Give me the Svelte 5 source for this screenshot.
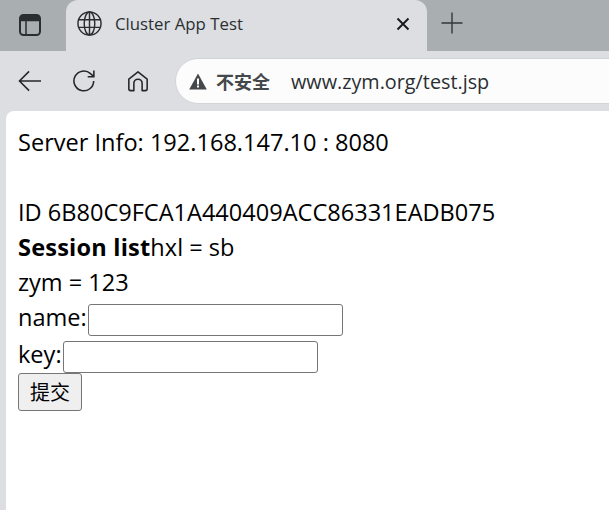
<script lang="ts">
  let name = $state('');
  let key = $state('');
</script>

<div class="browser">
  <div class="tabstrip">
    <div class="strip-btn">
      <svg width="24" height="24" viewBox="0 0 24 24" fill="none" stroke="#2b2e31" stroke-width="2">
        <rect x="2" y="2" width="20" height="20" rx="3.5" />
        <path d="M2 7.5h20M8 7.5V22" stroke-width="1.5" />
        <path d="M3 5h18" stroke-width="4" />
      </svg>
    </div>
    <div class="tab">
      <svg class="globe" width="25" height="25" viewBox="0 0 26 26" fill="none" stroke="#2b2e31" stroke-width="1.5">
        <circle cx="13" cy="13" r="12" />
        <ellipse cx="13" cy="13" rx="5.500" ry="12" />
        <path d="M13 1v24M1.800 9h22.400M1.800 17h22.400" />
      </svg>
      <span class="tab-title">Cluster App Test</span>
      <svg class="close" width="14" height="14" viewBox="0 0 14 14" stroke="#17191b" stroke-width="1.9">
        <path d="M1.5 1.5l11 11M12.500 1.500l-11 11" />
      </svg>
    </div>
    <svg class="plus" width="22" height="22" viewBox="0 0 22 22" stroke="#33373a" stroke-width="1.4">
      <path d="M11 0.500v21M0.500 11h21" />
    </svg>
  </div>

  <div class="toolbar">
    <svg class="nav back" width="24" height="22" viewBox="0 0 26 24" fill="none" stroke="#24272a" stroke-width="1.7">
      <path d="M25 12H1.500M12 1.500L1.500 12 12 22.500" />
    </svg>
    <svg class="nav reload" width="24" height="24" viewBox="0 0 26 26" fill="none" stroke="#24272a" stroke-width="1.7">
      <path d="M23.500 13A10.700 10.700 0 1 1 20 5L23.500 8" />
      <path d="M23.700 1.500V8.300H17" />
    </svg>
    <svg class="nav home" width="22" height="22" viewBox="0 0 24 24" fill="none" stroke="#24272a" stroke-width="1.7" stroke-linejoin="round">
      <path d="M2 10L12 2l10 8v10.500a2 2 0 0 1-2 2h-3.500v-8a4.500 4.500 0 0 0-9 0v8H4a2 2 0 0 1-2-2z" />
    </svg>
    <div class="omnibox">
      <svg width="18" height="17" viewBox="0 0 18 17">
        <path d="M9 0.500L17.800 16.500H0.200z" fill="#45484b" />
        <path d="M8 5.500h2v6H8zM8 12.500h2v2H8z" fill="#fff" />
      </svg>
      <span class="insecure">不安全</span>
      <span class="url">www.zym.org/test.jsp</span>
    </div>
  </div>

  <main class="page">
    <div>Server Info: 192.168.147.10 : 8080</div>
    <br />
    <div>ID 6B80C9FCA1A440409ACC86331EADB075</div>
    <div><b>Session list</b>hxl = sb</div>
    <div>zym = 123</div>
    <form on:submit|preventDefault>
      <div class="field">name:<input type="text" bind:value={name} /></div>
      <div class="field">key:<input type="text" bind:value={key} /></div>
      <button type="submit">提交</button>
    </form>
  </main>
</div>

<style>
  :global(body) {
    margin: 0;
    overflow: hidden;
  }

  .browser {
    width: 609px;
    height: 510px;
    overflow: hidden;
    background: #dcdee2;
    font-family: "Open Sans", "Noto Sans CJK SC", sans-serif;
    display: flex;
    flex-direction: column;
  }

  .tabstrip {
    height: 51px;
    flex: none;
    background: #a9aeb1;
    display: flex;
    align-items: flex-start;
  }

  .strip-btn {
    width: 66px;
    height: 51px;
    flex: none;
    padding: 13px 0 0 18px;
    box-sizing: border-box;
    background: #a9aeb1;
  }

  .tab {
    width: 361px;
    height: 51px;
    flex: none;
    background: #dcdee2;
    border-radius: 12px 12px 0 0;
    display: flex;
    align-items: center;
    box-sizing: border-box;
    padding: 0 17px 4px 11px;
  }

  .tab-title {
    margin-left: 13px;
    font-size: 16.8px;
    color: #2b2e31;
    flex: 1;
  }

  .plus {
    margin: 12px 0 0 14px;
  }

  .toolbar {
    height: 60px;
    flex: none;
    display: flex;
    align-items: center;
    padding-left: 18px;
    box-sizing: border-box;
  }

  .nav {
    flex: none;
    margin-bottom: 1px;
  }

  .reload {
    margin-left: 30px;
  }

  .home {
    margin-left: 31px;
  }

  .omnibox {
    margin-left: 26px;
    height: 46px;
    flex: 1;
    margin-right: -40px;
    background: #fcfcfc;
    border: 1px solid #d2d4d7;
    border-radius: 23px;
    display: flex;
    align-items: center;
    padding-left: 13px;
    box-sizing: border-box;
  }

  .insecure {
    margin-left: 9px;
    font-size: 18px;
    font-weight: 700;
    color: #45484b;
    font-family: "Noto Sans CJK SC", sans-serif;
  }

  .url {
    margin-left: 21px;
    font-size: 19.8px;
    color: #2b2e31;
  }

  .page {
    flex: 1;
    margin-left: 6px;
    background: #fff;
    border-radius: 8px 0 0 0;
    padding: 14px 0 0 12px;
    font-size: 23.55px;
    line-height: 35px;
    color: #000;
  }

  .page b {
    font-weight: 700;
    letter-spacing: 0.2px;
  }

  .field {
    display: flex;
    align-items: flex-start;
    height: 37px;
  }

  .field + .field {
    height: 36px;
  }

  input {
    width: 255px;
    height: 32px;
    margin: 4px 0 0 1px;
    box-sizing: border-box;
    border: 1px solid #767676;
    border-radius: 3px;
    padding: 1px 2px;
    background: #fff;
  }

  button {
    display: block;
    width: 64px;
    height: 38px;
    box-sizing: border-box;
    border: 1px solid #767676;
    border-radius: 3px;
    background: #efefef;
    font-family: "Noto Sans CJK SC", sans-serif;
    font-size: 20px;
    line-height: 1;
    color: #000;
    padding: 0;
  }
</style>
